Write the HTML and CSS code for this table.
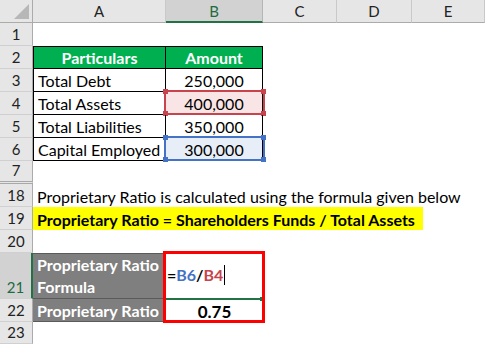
FILE: index.html
```html
<!DOCTYPE html>
<html>
<head>
<meta charset="utf-8">
<link rel="stylesheet" href="styles.css">
</head>
<body>
<div class="sheet">
  <div class="corner"><span class="tri"></span></div>
  <div class="ch">A</div>
  <div class="ch sel">B</div>
  <div class="ch">C</div>
  <div class="ch">D</div>
  <div class="ch">E</div>

  <div class="rh">1</div>
  <div class="c rest5"></div>

  <div class="rh">2</div>
  <div class="c t tl top th">Particulars</div>
  <div class="c t top th">Amount</div>
  <div class="c rest3"></div>

  <div class="rh">3</div>
  <div class="c t tl">Total Debt</div>
  <div class="c t num">250,000</div>
  <div class="c rest3"></div>

  <div class="rh">4</div>
  <div class="c t tl">Total Assets</div>
  <div class="c t num ref red">400,000<span class="box"><i class="k k1"></i><i class="k k2"></i><i class="k k3"></i><i class="k k4"></i></span></div>
  <div class="c rest3"></div>

  <div class="rh">5</div>
  <div class="c t tl">Total Liabilities</div>
  <div class="c t num">350,000</div>
  <div class="c rest3"></div>

  <div class="rh">6</div>
  <div class="c t tl">Capital Employed</div>
  <div class="c t num ref blue">300,000<span class="box"><i class="k k1"></i><i class="k k2"></i><i class="k k3"></i><i class="k k4"></i></span></div>
  <div class="c rest3"></div>

  <div class="rh hid">7</div>
  <div class="c rest5"></div>

  <div class="rh">18</div>
  <div class="c rest5 over">Proprietary Ratio is calculated using the formula given below</div>

  <div class="rh">19</div>
  <div class="c rest5 nopad"><div class="yellow">Proprietary Ratio = Shareholders Funds / Total Assets</div></div>

  <div class="rh">20</div>
  <div class="c rest5"></div>

  <div class="rh rsel">21</div>
  <div class="c gray wrap">Proprietary Ratio<br>Formula</div>
  <div class="c edit"><span class="fx">=<span class="fb">B6</span>/<span class="fr">B4</span></span><span class="caret"></span><span class="edge"><i class="eq"></i></span></div>
  <div class="c rest3"></div>

  <div class="rh">22</div>
  <div class="c gray g2">Proprietary Ratio</div>
  <div class="c num result">0.75</div>
  <div class="c rest3"></div>

  <div class="rh">23</div>
  <div class="c rest5"></div>

  <div class="redbox"></div>
</div>
</body>
</html>
```

FILE: styles.css
```css
html, body {
  margin: 0;
  padding: 0;
  background: #ffffff;
}

.sheet {
  position: relative;
  width: 485px;
  height: 344px;
  overflow: hidden;
  display: grid;
  grid-template-columns: 33px 133px 97px 74px 75px 73px;
  grid-template-rows: 23px 23px 23px 23px 23px 23px 23px 23px 23px 23px 23px 46px 23px 22px;
  font-family: Lato, "Liberation Sans", sans-serif;
  font-size: 16px;
  color: #000;
}

.sheet > div {
  box-sizing: border-box;
}

.corner {
  position: relative;
  background: #e6e6e6;
  border-right: 1px solid #ababab;
  border-bottom: 1px solid #ababab;
}

.tri {
  position: absolute;
  right: 3px;
  bottom: 3px;
  width: 0;
  height: 0;
  border-left: 15px solid transparent;
  border-bottom: 15px solid #b7b7b7;
}

.ch {
  background: #e6e6e6;
  border-right: 1px solid #c9c9c9;
  border-bottom: 1px solid #ababab;
  display: flex;
  align-items: center;
  justify-content: center;
  color: #222;
  font-size: 15px;
}

.ch.sel {
  background: #d2d2d2;
  color: #1d6b40;
  border-bottom: 2px solid #217346;
  border-right-color: #b5b5b5;
}

.rh {
  background: #e6e6e6;
  border-right: 1px solid #ababab;
  border-bottom: 1px solid #d0d0d0;
  display: flex;
  align-items: flex-end;
  justify-content: center;
  padding-bottom: 1px;
  line-height: 19px;
  color: #222;
  font-size: 15px;
}

.rh.hid {
  border-bottom: 3px double #a8a8a8;
}

.rh.rsel {
  background: #d2d2d2;
  color: #1d6b40;
  border-right: 2px solid #217346;
}

.c {
  display: flex;
  align-items: flex-end;
  padding: 0 4px 1px 4px;
  line-height: 19px;
  white-space: nowrap;
  position: relative;
}

.rest5 { grid-column: span 5; }
.rest3 { grid-column: span 3; }

.t {
  border-right: 1px solid #000;
  border-bottom: 1px solid #000;
}

.tl { border-left: 1px solid #000; }
.top { border-top: 1px solid #000; }

.th {
  background: #00b050;
  color: #fff;
  font-weight: bold;
  justify-content: center;
}

.num { justify-content: center; }

.ref.red { background: #f9e5e5; }
.ref.blue { background: #e8eef8; }

.box {
  position: absolute;
  left: -2px;
  right: -3px;
  top: -2px;
  bottom: -1px;
  border: 2px solid;
  box-sizing: border-box;
}

.red .box { border-color: #c8434b; }
.blue .box { border-color: #4472c4; }

.k {
  position: absolute;
  width: 5px;
  height: 5px;
}
.red .k { background: #c8434b; }
.blue .k { background: #4472c4; }
.k1 { left: -3px; top: -3px; }
.k2 { right: -3px; top: -3px; }
.k3 { left: -3px; bottom: -3px; }
.k4 { right: -3px; bottom: -3px; }

.nopad { padding: 0; align-items: stretch; }

.yellow {
  width: 390px;
  background: #ffff00;
  font-weight: bold;
  padding: 0 0 1px 4px;
  display: flex;
  align-items: flex-end;
  box-sizing: border-box;
}

.gray {
  background: #7f7f7f;
  color: #fff;
  font-weight: bold;
  border-bottom: 1px solid #5a5a5a;
}

.wrap {
  white-space: normal;
  line-height: 22px;
  padding-bottom: 0;
  align-items: flex-end;
  border-top: 1px solid #5a5a5a;
}

.edit {
  align-items: center;
  padding: 0 0 3px 1px;
}

.fx {
  font-weight: bold;
  font-size: 16px;
}
.fb { color: #4472c4; }
.fr { color: #c8434b; }

.caret {
  display: inline-block;
  width: 1px;
  height: 20px;
  background: #000;
  margin-left: 1px;
}

.edge {
  position: absolute;
  left: 0;
  right: 0;
  bottom: -1px;
  height: 2px;
  background: #217346;
}

.eq {
  position: absolute;
  right: -1px;
  top: -1px;
  width: 4px;
  height: 4px;
  background: #217346;
}

.result {
  font-weight: bold;
  font-size: 17px;
}

.redbox {
  position: absolute;
  left: 163px;
  top: 251px;
  width: 102px;
  height: 72px;
  border: 3px solid #ff0000;
  box-sizing: border-box;
}
```
